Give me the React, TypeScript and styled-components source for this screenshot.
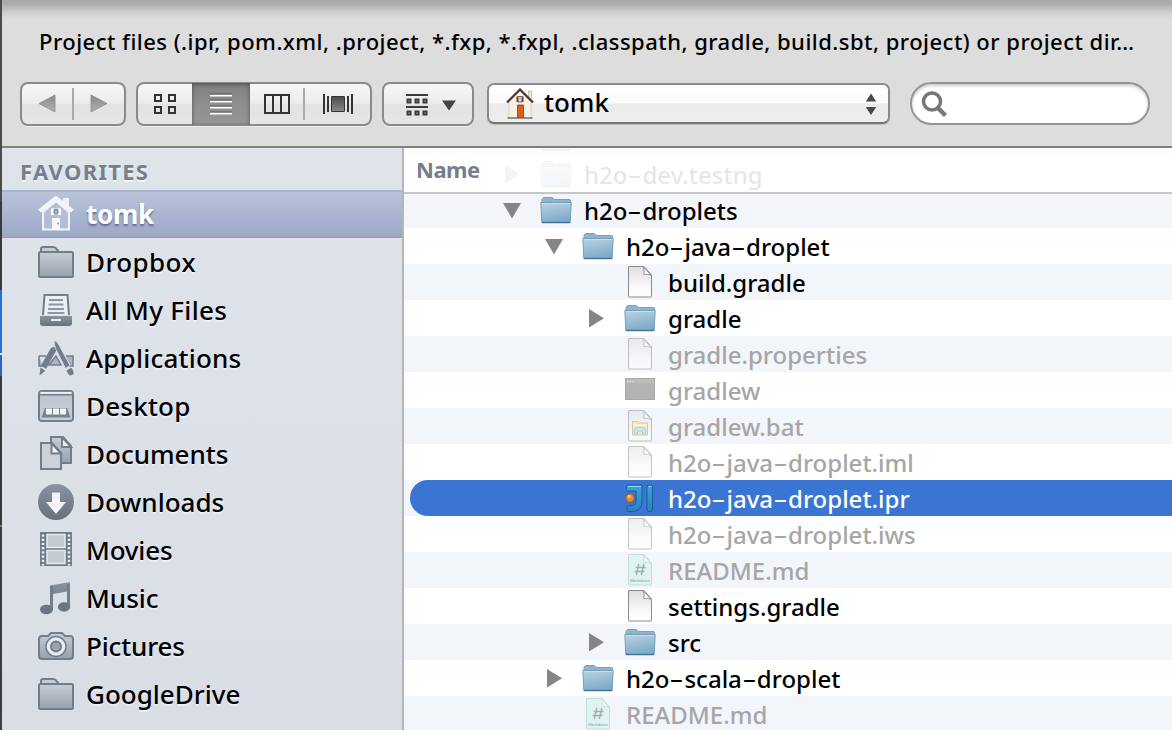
import React from 'react';
import styled, { createGlobalStyle, css } from 'styled-components';

const GlobalStyle = createGlobalStyle`
  * { box-sizing: border-box; }
  body { margin: 0; font-family: "Noto Sans", "Open Sans", sans-serif; color: #000; }
  svg { display: block; flex: none; }
`;

const Window = styled.div`
  display: flex;
  width: 1172px;
  height: 730px;
  overflow: hidden;
  background: #ddd;
`;

const Edge = styled.div`
  flex: none;
  width: 2px;
  background: linear-gradient(#4b4b4b 0 201px, #3a3a3a 201px 290px, #2a6fd0 290px 353px, #d8e4f4 353px 355px, #2a66c0 355px 376px, #39393b 376px 525px, #77777a 525px 527px, #3c3d42 527px);
`;

const Sheet = styled.div`
  flex: 1;
  min-width: 0;
  display: flex;
  flex-direction: column;
`;

const Top = styled.header`
  height: 148px;
  flex: none;
  border-bottom: 2px solid #80807e;
  background: linear-gradient(#a9a9a9, #adadad 4px, #bcbcbc 8px, #d0d0d0 13px, #dadada 18px, #ddd 22px);
`;

const Title = styled.div`
  height: 82px;
  padding: 0 0 0 37px;
  line-height: 82px;
  font-size: 22px;
  font-weight: 500;
  letter-spacing: 0.48px;
  white-space: nowrap;
`;

const Toolbar = styled.div`
  display: flex;
  align-items: flex-start;
  padding-left: 18px;
`;

const Group = styled.div<{ $w: number; $ml?: number }>`
  display: flex;
  align-items: stretch;
  width: ${(p) => p.$w}px;
  height: 44px;
  margin-left: ${(p) => p.$ml ?? 0}px;
  border: 2px solid #8a8a8a;
  border-radius: 8px;
  background: linear-gradient(#f6f6f6, #ececec 48%, #e2e2e2 52%, #e6e6e6);
  box-shadow: 0 1px 0 rgba(255, 255, 255, 0.5);
`;

const Segment = styled.div<{ $w: number; $on?: boolean }>`
  display: flex;
  align-items: center;
  justify-content: center;
  width: ${(p) => p.$w}px;
  ${(p) =>
    p.$on &&
    css`
      margin: -1px 0;
      padding-bottom: 1px;
      background: linear-gradient(#808080, #8e8e8e 50%, #969696);
      box-shadow: inset 0 1px 4px rgba(0, 0, 0, 0.45);
    `}
`;

const MenuSegment = styled(Segment)`
  padding: 2px 0 0 6px;
`;

const Divider = styled.div`
  width: 2px;
  margin: 4px 0;
  background: #aaa;
`;

const Popup = styled.div`
  display: flex;
  align-items: center;
  width: 403px;
  height: 41px;
  margin: 0 0 0 13px;
  margin-top: 1px;
  padding: 0 11px 0 17px;
  border: 2px solid #8a8a8a;
  border-bottom-color: #757575;
  border-radius: 7px;
  background: linear-gradient(#fff, #fafafa 49%, #ebebeb 51%, #eee);
  box-shadow: 0 1px 1px rgba(0, 0, 0, 0.15);
`;

const PopupLabel = styled.span`
  flex: 1;
  padding: 0 0 3px 10px;
  font-size: 26px;
  line-height: 34px;
  font-weight: 500;
`;

const Search = styled.div`
  display: flex;
  align-items: center;
  width: 240px;
  height: 43px;
  margin-left: 20px;
  padding-left: 9px;
  border: 2px solid #959595;
  border-radius: 22px;
  background: #fff;
  box-shadow: inset 0 2px 3px rgba(0, 0, 0, 0.2);
`;

const Body = styled.div`
  flex: 1;
  min-height: 0;
  display: flex;
`;

const Sidebar = styled.nav`
  width: 402px;
  flex: none;
  border-right: 2px solid #b4b5b7;
  background: linear-gradient(#dfe3ea, #d9dee6);
`;

const SideHeading = styled.h2`
  height: 42px;
  margin: 0;
  padding: 2px 0 0 18px;
  font-size: 22px;
  line-height: 43px;
  font-weight: 700;
  color: #74808f;
  letter-spacing: 1.3px;
  text-shadow: 0 2px 0 rgba(255, 255, 255, 0.6);
`;

const SideRow = styled.div<{ $on?: boolean }>`
  display: flex;
  align-items: center;
  height: 48px;
  padding-left: 36px;
  font-size: 26px;
  font-weight: 500;
  line-height: 48px;
  text-shadow: 0 2px 0 rgba(255, 255, 255, 0.5);
  ${(p) =>
    p.$on &&
    css`
      color: #fff;
      font-weight: 700;
      text-shadow: 0 2px 2px rgba(50, 65, 100, 0.6);
      box-shadow: inset 0 2px #a9b5cd, inset 0 -1px #8f9dbd;
      background: linear-gradient(#bac5dc, #9aa7c6);
    `}
`;

const SideLabel = styled.span<{ $ls?: number }>`
  padding-left: 12px;
  white-space: nowrap;
  letter-spacing: ${(p) => p.$ls ?? 0}px;
`;

const Main = styled.main`
  position: relative;
  flex: 1;
  min-width: 0;
  overflow: hidden;
  background: #fff;
`;

const ColumnHeader = styled.div`
  position: absolute;
  inset: 0 0 auto 0;
  height: 46px;
  padding-left: 12px;
  border-bottom: 2px solid #c6c6c6;
  background: rgba(255, 255, 255, 0.9);
  color: #737f8f;
  font-size: 22px;
  font-weight: 700;
  letter-spacing: -0.5px;
  line-height: 42px;
`;

const List = styled.div`
  margin-top: -28px;
`;

const Row = styled.div<{ $level: number; $tint: boolean; $on?: boolean; $dim?: boolean }>`
  display: flex;
  align-items: center;
  height: 36px;
  padding-left: ${(p) => 98 + 42 * p.$level}px;
  background: ${(p) => (p.$tint ? '#f2f5fa' : '#fff')};
  color: ${(p) => (p.$dim ? '#a6a6a6' : '#000')};
  font-size: 24px;
  line-height: 29px;
  font-weight: 500;
  ${(p) =>
    p.$on &&
    css`
      margin-left: 6px;
      padding-left: ${92 + 42 * p.$level}px;
      border-radius: 18px 0 0 18px;
      background: #3b75d3;
      color: #fff;
    `}
`;

const RowSlot = styled.div<{ $tint: boolean }>`
  background: ${(p) => (p.$tint ? '#f2f5fa' : '#fff')};
`;

const Disclosure = styled.div`
  width: 20px;
  margin-right: 18px;
`;

const IconSlot = styled.div<{ $dim?: boolean }>`
  width: 32px;
  opacity: ${(p) => (p.$dim ? 0.5 : 1)};
`;

const FileName = styled.span`
  padding: 1px 0 0 12px;
  white-space: nowrap;
`;

const Hyphen = styled.span`
  display: inline-block;
  width: 15px;
  text-align: center;
  letter-spacing: 0;
  transform: scale(1.8, 0.9);
`;

/* ---------- icons ---------- */

const S = '#727e8c';

const Gradients = () => (
  <svg width="0" height="0" style={{ position: 'absolute' }}>
    <defs>
      <linearGradient id="grey" x1="0" y1="0" x2="0" y2="1">
        <stop offset="0" stopColor="#c8cdd5" />
        <stop offset="1" stopColor="#98a0ab" />
      </linearGradient>
      <linearGradient id="slate" x1="0" y1="0" x2="0" y2="1">
        <stop offset="0" stopColor="#8a939f" />
        <stop offset="1" stopColor="#66727f" />
      </linearGradient>
      <linearGradient id="desk" x1="0" y1="0" x2="0" y2="1">
        <stop offset="0" stopColor="#bcc2cc" />
        <stop offset="1" stopColor="#c9ced7" />
      </linearGradient>
      <linearGradient id="folder" x1="0" y1="0" x2="0.3" y2="1">
        <stop offset="0" stopColor="#bcd3e2" />
        <stop offset="1" stopColor="#7eacca" />
      </linearGradient>
      <linearGradient id="page" x1="0" y1="0" x2="0" y2="1">
        <stop offset="0" stopColor="#dedede" />
        <stop offset="0.7" stopColor="#fafafa" />
        <stop offset="1" stopColor="#fff" />
      </linearGradient>
      <linearGradient id="idea" x1="0" y1="0" x2="0" y2="1">
        <stop offset="0" stopColor="#35a8dd" />
        <stop offset="1" stopColor="#2f7fbd" />
      </linearGradient>
      <linearGradient id="arrow" x1="0" y1="0" x2="0" y2="1">
        <stop offset="0" stopColor="#8a8a8a" />
        <stop offset="1" stopColor="#b0b0b0" />
      </linearGradient>
      <linearGradient id="dark" x1="0" y1="0" x2="0" y2="1">
        <stop offset="0" stopColor="#4a4a4a" />
        <stop offset="1" stopColor="#8a8a8a" />
      </linearGradient>
    </defs>
  </svg>
);

const Side = ({ children }: { children: React.ReactNode }) => (
  <svg width="36" height="36" viewBox="0 0 36 36" fill="none">
    {children}
  </svg>
);

const HomeIcon = () => (
  <Side>
    <path d="M25 2h6v11l-6-5z" fill="#eef1f7" />
    <path d="M5 16 L18 5 L31 16 V33.500 H5Z" fill="#b3bfd6" stroke="#f3f5f9" strokeWidth="2" />
    <path d="M1.500 15 L18 2 L34.500 15" stroke="#f3f5f9" strokeWidth="4" />
    <path d="M13 12.500h10v6.500h-10z" fill="#fff" />
    <path d="M16 13.500h4v4.500h-4z" fill="#9aa8c2" stroke="#7f8fac" />
    <path d="M14 22h8v12h-8z" fill="#f6f8fb" />
    <circle cx="20" cy="27.500" r="1" fill="#8798b8" />
  </Side>
);
const SideFolder = () => (
  <Side>
    <path d="M3 9V5q0-2 2-2h10q2 0 3 1.500l3 3.500" fill="#c6cbd3" stroke={S} strokeWidth="2" />
    <rect x="1" y="8" width="34" height="25" rx="1.500" fill="url(#grey)" stroke={S} strokeWidth="2" />
  </Side>
);
const AllFilesIcon = () => (
  <Side>
    <path d="M5 23 L6.500 3H29.500L31 23" fill="#eceff3" stroke={S} strokeWidth="2" />
    <path d="M11 8h14M10.500 12.500h15M10 17h16M9.500 21h17" stroke="#8d96a2" strokeWidth="1.800" />
    <path d="M2 24h32v7q0 3-3 3H5q-3 0-3-3z" fill="url(#slate)" />
    <path d="M13 27h10v2h-10z" fill="#e6eaf0" />
  </Side>
);
const AppsIcon = () => (
  <Side>
    <path d="M1 16h7M28 16h7v10h-4M1 16v10h4M11 25h12l-5-9z" fill="#aeb5bf" stroke={S} strokeWidth="1.500" />
    <path d="M12 9.500q1.500-3 4-2.500 3 1 2.200 3.800L8 29l-5-3.500z" fill="#717d8b" />
    <path d="M2.500 27.500l4.800 3.200L1.500 35.500z" fill="#717d8b" />
    <path d="M16 0.500q3 0.500 5 4.500l11 20.500-4.500 3L18 9.500q-2-5-2-9z" fill="#717d8b" stroke="#dde2e9" strokeWidth="0.800" />
    <path d="M28.500 30.500l4.700-2.700q3 3 2.500 6.200l-4 1.700q-2-2-3.200-5.200z" fill="#717d8b" />
  </Side>
);
const DesktopIcon = () => (
  <Side>
    <rect x="1" y="3" width="34" height="30" rx="3" fill="url(#desk)" stroke={S} strokeWidth="2" />
    <path d="M2.500 4.800h31" stroke="#eef1f5" strokeWidth="1.800" />
    <path d="M2 6.800h32" stroke={S} strokeWidth="1.500" />
    <path d="M7 20h22l3.500 9.500h-29z" fill="#76828f" />
    <path d="M8 20.500h6v6H8zM15 20.500h6v6h-6zM22 20.500h6v6h-6z" fill="#f2f4f8" />
  </Side>
);
const DocumentsIcon = () => (
  <Side>
    <path d="M13 1h12l8 9v17H13z" fill="url(#grey)" stroke={S} strokeWidth="2" />
    <path d="M24 1v10h9z" fill="#edf0f4" stroke={S} strokeWidth="2" />
    <path d="M3 7h11l9 10v16H3z" fill="#cdd2da" stroke={S} strokeWidth="2" />
    <path d="M13.500 7v10.500h9.500z" fill="#f2f4f8" stroke={S} strokeWidth="2" />
  </Side>
);
const DownloadsIcon = () => (
  <Side>
    <circle cx="18" cy="18" r="18" fill="url(#slate)" />
    <path d="M14 8.500h8v9.500h6L18 30 8 18h6z" fill="#f1f3f6" />
  </Side>
);
const MoviesIcon = () => (
  <Side>
    <path d="M2 0h32v34H2z" fill="#717d8b" />
    <path d="M9 2.500h18v13H9zM9 18.500h18v13H9z" fill="#c5cad2" stroke="#e8ebf0" strokeWidth="1.500" />
    <path d="M5 2.500v31M31 2.500v31" stroke="#eceff3" strokeWidth="2.500" strokeDasharray="2.200 2" />
  </Side>
);
const MusicIcon = () => (
  <Side>
    <path d="M12 5.500L32 2v9L15 14v16h-3z" fill="url(#slate)" />
    <path d="M12 6h3v23h-3zM29 4h3v23h-3z" fill="#727e8b" />
    <ellipse cx="8.500" cy="29.500" rx="6.500" ry="4.800" fill="#6a7683" />
    <ellipse cx="26" cy="27" rx="6.200" ry="4.700" fill="#6a7683" />
  </Side>
);
const PicturesIcon = () => (
  <Side>
    <path d="M1 11q0-3 3-3h6l3-3h11l3 3h5q3 0 3 3v17q0 3-3 3H4q-3 0-3-3z" fill="url(#grey)" stroke={S} strokeWidth="2" />
    <circle cx="18" cy="18.500" r="10" fill="#e9ecf0" stroke={S} strokeWidth="1.500" />
    <circle cx="18" cy="18.500" r="5" fill="#9aa3ae" stroke={S} strokeWidth="2" />
  </Side>
);

const FolderIcon = () => (
  <svg width="32" height="36" viewBox="0 0 32 36" fill="none">
    <path d="M2 12V7.500l1.500-2h9l1.500 2h15.500q1 0 1 1V12z" fill="#93b4c8" stroke="#7b9fb5" />
    <path d="M0.800 10.500h30.400l-1 20H1.800z" fill="url(#folder)" stroke="#6c98b3" strokeWidth="0.900" />
    <path d="M1.800 30.500h28.400" stroke="#47748f" strokeWidth="1.500" />
    <path d="M1.800 11.500h28.400" stroke="#d3e2ec" strokeWidth="0.800" />
  </svg>
);

const PageShape = ({ fill = 'url(#page)', stroke = '#8a8a8a' }: { fill?: string; stroke?: string }) => (
  <>
    <path d="M5 2.500h15l7.500 8.500v21.500q0 .5-.5 .5H5q-.5 0-.5-.5v-29.500q0-.5 .5-.5z" fill={fill} stroke={stroke} />
    <path d="M19 2.500q2 3 .8 8q4-1 7.500 1z" fill="#fff" stroke={stroke} strokeWidth="0.900" />
  </>
);
const FileIcon = () => (
  <svg width="32" height="36" viewBox="0 0 32 36" fill="none">
    <PageShape />
  </svg>
);
const ShellIcon = () => (
  <svg width="32" height="36" viewBox="0 0 32 36" fill="none">
    <rect x="1.500" y="6.500" width="29" height="21" fill="#696969" stroke="#555" />
    <path d="M2 7h28v4H2z" fill="#7d7d7d" />
    <path d="M3.500 9.500h6" stroke="#8fe08a" strokeWidth="1.500" strokeDasharray="1.500 .6" />
  </svg>
);
const BatIcon = () => (
  <svg width="32" height="36" viewBox="0 0 32 36" fill="none">
    <PageShape />
    <path d="M8.500 13.500h5l1 1.500h9v12h-15z" fill="#f0dc88" stroke="#b9a550" />
    <path d="M9 17h14" stroke="#fff4b8" strokeWidth="1.500" />
    <path d="M10.500 26v-3.500q0-3 3-3h5q3 0 3 3V26h-3v-3h-5v3z" fill="#a6dcf5" stroke="#5bb0dc" />
  </svg>
);
const IdeaIcon = () => (
  <svg width="32" height="36" viewBox="0 0 32 36" fill="none">
    <path
      d="M4 5h13q1 0 1 1v15q0 10.500-10 10.500H4.500q-1.500 0-1.500-1.500v-3q0-1.500 1.500-1.500h3.500q4 0 4-5v-9.500h-8q-1.500 0-1.500-1.500v-3q0-1.500 1.500-1.500z"
      fill="url(#idea)"
      stroke="#17588f"
      strokeWidth="0.900"
    />
    <rect x="23" y="5" width="5.500" height="26.500" rx="2" fill="url(#idea)" stroke="#17588f" strokeWidth="0.900" />
    <path d="M4 6.500h13M24.500 6.500h3" stroke="#8cd6f2" />
    <circle cx="6" cy="18" r="4.200" fill="#f48a24" stroke="#9c4a10" strokeWidth="0.700" />
    <circle cx="5.200" cy="16.500" r="1.500" fill="#ffc98a" />
  </svg>
);
const MarkdownIcon = () => (
  <svg width="32" height="36" viewBox="0 0 32 36" fill="none">
    <PageShape fill="#cdf3ea" stroke="#8ecfc2" />
    <path d="M14.800 12l-2.500 11M19.800 12l-2.500 11M11.500 15.500h10M10.500 19.500h10" stroke="#5c6a68" strokeWidth="1.500" />
    <text x="16" y="30" textAnchor="middle" fontFamily="Noto Sans" fontSize="3.700" fontWeight="700" fill="#5c7a75">
      Markdown
    </text>
  </svg>
);

const fileIcons = {
  folder: FolderIcon,
  file: FileIcon,
  shell: ShellIcon,
  bat: BatIcon,
  idea: IdeaIcon,
  md: MarkdownIcon,
};

const Triangle = ({ open }: { open: boolean }) => (
  <svg width="20" height="36" viewBox="0 0 20 36" fill="#858585">
    {open ? <path d="M1 11h18l-9 15.500z" /> : <path d="M3 9v18.500l15-9.300z" />}
  </svg>
);

/* ---------- data ---------- */

type SideItem = { name: string; Icon: React.FC; on?: boolean; ls?: number };
const sideItems: SideItem[] = [
  { name: 'tomk', Icon: HomeIcon, on: true, ls: -0.3 },
  { name: 'Dropbox', Icon: SideFolder, ls: 0.4 },
  { name: 'All My Files', Icon: AllFilesIcon, ls: 0.3 },
  { name: 'Applications', Icon: AppsIcon, ls: 0.22 },
  { name: 'Desktop', Icon: DesktopIcon, ls: 0.2 },
  { name: 'Documents', Icon: DocumentsIcon },
  { name: 'Downloads', Icon: DownloadsIcon },
  { name: 'Movies', Icon: MoviesIcon, ls: -0.2 },
  { name: 'Music', Icon: MusicIcon },
  { name: 'Pictures', Icon: PicturesIcon, ls: -0.15 },
  { name: 'GoogleDrive', Icon: SideFolder },
];

type Entry = {
  name: string;
  kind: keyof typeof fileIcons;
  level: number;
  open?: boolean;
  dim?: boolean;
  on?: boolean;
};
const entries: Entry[] = [
  { name: '', kind: 'folder', level: 0 },
  { name: 'h2o-dev.testng', kind: 'folder', level: 0, open: false },
  { name: 'h2o-droplets', kind: 'folder', level: 0, open: true },
  { name: 'h2o-java-droplet', kind: 'folder', level: 1, open: true },
  { name: 'build.gradle', kind: 'file', level: 2 },
  { name: 'gradle', kind: 'folder', level: 2, open: false },
  { name: 'gradle.properties', kind: 'file', level: 2, dim: true },
  { name: 'gradlew', kind: 'shell', level: 2, dim: true },
  { name: 'gradlew.bat', kind: 'bat', level: 2, dim: true },
  { name: 'h2o-java-droplet.iml', kind: 'file', level: 2, dim: true },
  { name: 'h2o-java-droplet.ipr', kind: 'idea', level: 2, on: true },
  { name: 'h2o-java-droplet.iws', kind: 'file', level: 2, dim: true },
  { name: 'README.md', kind: 'md', level: 2, dim: true },
  { name: 'settings.gradle', kind: 'file', level: 2 },
  { name: 'src', kind: 'folder', level: 2, open: false },
  { name: 'h2o-scala-droplet', kind: 'folder', level: 1, open: false },
  { name: 'README.md', kind: 'md', level: 1, dim: true },
];

const withHyphens = (name: string) =>
  name.split('-').map((part, i) => (
    <React.Fragment key={i}>
      {i > 0 && <Hyphen>-</Hyphen>}
      {part}
    </React.Fragment>
  ));

export default function App() {
  return (
    <>
      <GlobalStyle />
      <Gradients />
      <Window>
        <Edge />
        <Sheet>
          <Top>
            <Title>
              Project files (.ipr, pom.xml, .project, *.fxp, *.fxpl, .classpath, gradle, build.sbt, project) or project dir…
            </Title>
            <Toolbar>
              <Group $w={106}>
                <Segment $w={50}>
                  <svg width="18" height="20" viewBox="0 0 18 20">
                    <path d="M17 1v17L1 9.500z" fill="url(#arrow)" stroke="#8c8c8c" strokeWidth="0.800" />
                  </svg>
                </Segment>
                <Divider />
                <Segment $w={50}>
                  <svg width="18" height="20" viewBox="0 0 18 20">
                    <path d="M1 1v17l16-8.500z" fill="url(#arrow)" stroke="#8c8c8c" strokeWidth="0.800" />
                  </svg>
                </Segment>
              </Group>
              <Group $w={236} $ml={10}>
                <Segment $w={54}>
                  <svg width="22" height="20" viewBox="0 0 22 20" fill="none" stroke="#333" strokeWidth="2">
                    <path d="M1 1h6v6H1zM15 1h6v6h-6zM1 13h6v6H1zM15 13h6v6h-6z" />
                  </svg>
                </Segment>
                <Segment $w={58} $on>
                  <svg width="22" height="22" viewBox="0 0 22 22" stroke="#fff" strokeWidth="2">
                    <path d="M0 2.500h22M0 8.500h22M0 14.500h22M0 20.500h22" />
                    <path d="M0 1h22M0 7h22M0 13h22M0 19h22" stroke="#555" strokeWidth="1" />
                  </svg>
                </Segment>
                <Segment $w={53}>
                  <svg width="26" height="20" viewBox="0 0 26 20" fill="none" stroke="#333" strokeWidth="2">
                    <path d="M1 1h24v18H1zM9 1v18M17 1v18" />
                  </svg>
                </Segment>
                <Divider />
                <Segment $w={65}>
                  <svg width="30" height="20" viewBox="0 0 30 20">
                    <path d="M1 0v20M5 2v16M25 2v16M29 0v20" stroke="#333" strokeWidth="2" />
                    <path d="M8.500 2.500h13v15h-13z" fill="url(#dark)" stroke="#333" />
                  </svg>
                </Segment>
              </Group>
              <Group $w={92} $ml={10}>
                <MenuSegment $w={88}>
                  <svg width="50" height="24" viewBox="0 0 50 24" fill="none" stroke="#3a3a3a" strokeWidth="2">
                    <path d="M0 2h22M0 14h22" />
                    <path d="M1.500 6.500h3v3h-3zM9.500 6.500h3v3h-3zM17.500 6.500h3v3h-3zM1.500 18.500h3v3h-3zM9.500 18.500h3v3h-3zM17.500 18.500h3v3h-3z" />
                    <path d="M36 7.500h14l-7 10z" fill="#444" stroke="none" />
                  </svg>
                </MenuSegment>
              </Group>
              <Popup>
                <svg width="28" height="32" viewBox="0 0 28 32" fill="none">
                  <path d="M22.500 3h3v9h-3z" fill="#efe6d2" stroke="#b5a78c" strokeWidth="0.600" />
                  <path d="M3 13L14 3l11 10v17H3z" fill="#f6f1e2" stroke="#c9c1ac" strokeWidth="0.600" />
                  <path d="M1 14.500L14 1.500l13 13" stroke="#4a3532" strokeWidth="2.200" />
                  <path d="M10.500 8.500h7v5.500h-7z" fill="#8b2f24" />
                  <path d="M12 8.500h4v5.500h-4z" fill="#c6ccd2" stroke="#555" strokeWidth="0.800" />
                  <path d="M11.500 17h6v12.500h-6z" fill="#d9601d" stroke="#8a3a14" strokeWidth="0.800" />
                  <path d="M1.500 30h25" stroke="#6e6a60" strokeWidth="1.400" />
                </svg>
                <PopupLabel>tomk</PopupLabel>
                <svg width="12" height="24" viewBox="0 0 12 24" fill="#484848">
                  <path d="M6 1.500l5.200 8H.8zM6 23l5.200-8H.8z" />
                </svg>
              </Popup>
              <Search>
                <svg width="27" height="27" viewBox="0 0 27 27" fill="none" stroke="#777">
                  <circle cx="11" cy="11.500" r="8.500" strokeWidth="3.500" />
                  <path d="M16.500 17.500l8 8" strokeWidth="4.500" />
                </svg>
              </Search>
            </Toolbar>
          </Top>
          <Body>
            <Sidebar>
              <SideHeading>FAVORITES</SideHeading>
              {sideItems.map(({ name, Icon, on, ls }) => (
                <SideRow key={name} $on={on}>
                  <Icon />
                  <SideLabel $ls={ls}>{name}</SideLabel>
                </SideRow>
              ))}
            </Sidebar>
            <Main>
              <List>
                {entries.map((e, i) => {
                  const Icon = fileIcons[e.kind];
                  const tint = i % 2 === 0;
                  return (
                    <RowSlot key={i} $tint={tint}>
                      <Row $level={e.level} $tint={tint} $on={e.on} $dim={e.dim}>
                        <Disclosure>{e.open !== undefined && <Triangle open={e.open} />}</Disclosure>
                        <IconSlot $dim={e.dim}>
                          <Icon />
                        </IconSlot>
                        <FileName>{withHyphens(e.name)}</FileName>
                      </Row>
                    </RowSlot>
                  );
                })}
              </List>
              <ColumnHeader>Name</ColumnHeader>
            </Main>
          </Body>
        </Sheet>
      </Window>
    </>
  );
}
